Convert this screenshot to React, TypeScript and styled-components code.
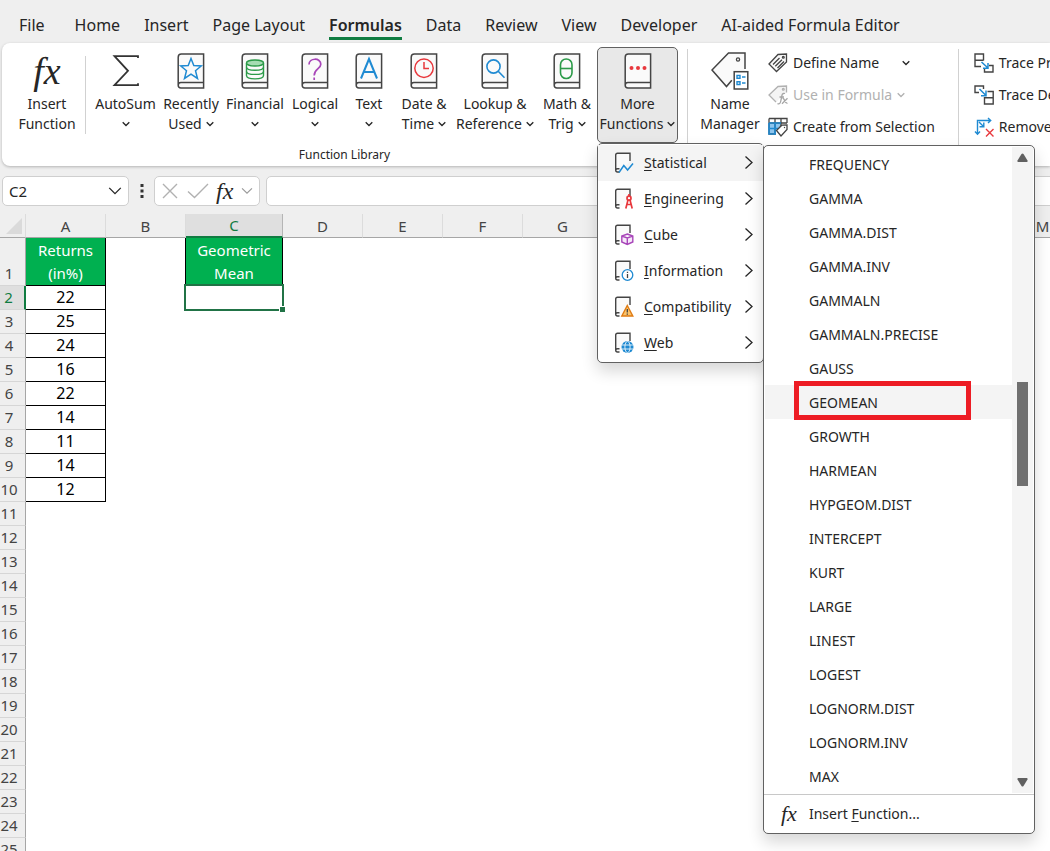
import React from "react";
import styled, { createGlobalStyle, css } from "styled-components";

const UI = `"Noto Sans", "Open Sans", sans-serif`;
const INK = "#262626";
const LINE = "#444444";
const BLUE = "#1f8ad2";
const GREEN = "#107c41";

const Global = createGlobalStyle`
  *, *::before, *::after { box-sizing: border-box; }
  body { margin: 0; background: #fff; color: ${INK}; font: 14px/20px ${UI}; }
  button, input { font: inherit; color: inherit; border: 0; background: none; padding: 0; margin: 0; }
  svg { display: block; flex: none; }
`;

const Page = styled.div`
  height: 100vh;
  overflow: hidden;
  display: flex;
  flex-direction: column;
  background: #efefef;
`;

/* ---------- tabs ---------- */
const Tabs = styled.nav`
  flex: none;
  display: flex;
  gap: 24px;
  height: 43px;
  padding: 10px 0 0 19px;
  white-space: nowrap;
`;
const Tab = styled.button<{ $active?: boolean; $wide?: boolean }>`
  height: 30px;
  font-size: 16px;
  line-height: 30px;
  margin-right: ${(p) => (p.$wide ? 6 : 0)}px;
  border-bottom: 3px solid ${(p) => (p.$active ? GREEN : "transparent")};
  font-weight: ${(p) => (p.$active ? 600 : 400)};
`;

/* ---------- ribbon ---------- */
const Ribbon = styled.div`
  flex: none;
  position: relative;
  z-index: 2;
  display: flex;
  height: 123px;
  margin-left: 2px;
  padding-top: 4px;
  background: #fff;
  border-radius: 8px 0 0 8px;
  box-shadow: 0 1px 3px rgba(0, 0, 0, 0.25);
  white-space: nowrap;
`;
const Group = styled.section`
  flex: none;
  display: flex;
  flex-direction: column;
`;
const GroupRow = styled.div<{ $pad?: string }>`
  display: flex;
  padding: ${(p) => p.$pad || "0 9px 0 8px"};
`;
const GroupName = styled.div`
  font-size: 12px;
  line-height: 24px;
  text-align: center;
`;
const Rule = styled.div<{ $short?: boolean }>`
  flex: none;
  width: 1px;
  height: ${(p) => (p.$short ? 78 : 112)}px;
  margin: ${(p) => (p.$short ? "9px 6px 0 1px" : "2px 0 0")};
  background: #d1d1d1;
`;
const BigButton = styled.button<{ $w: number; $open?: boolean }>`
  display: flex;
  flex-direction: column;
  align-items: center;
  width: ${(p) => p.$w}px;
  height: 96px;
  padding-top: 5px;
  font-size: 14px;
  line-height: 20px;
  border: 1px solid transparent;
  border-radius: 5px;
  ${(p) =>
    p.$open &&
    css`
      background: #e8e8e8;
      border-color: #616161;
    `}
`;
const BigIcon = styled.span`
  display: flex;
  align-items: center;
  justify-content: center;
  height: 36px;
  margin-bottom: 5px;
`;
const LabelLine = styled.span`
  display: flex;
  align-items: center;
  justify-content: center;
  gap: 4px;
  height: 20px;
`;
const Fx = styled.span<{ $size: number }>`
  font: italic ${(p) => p.$size}px/1 "Liberation Serif", serif;
  color: #262626;
`;
const SmallColumn = styled.div<{ $indent?: boolean }>`
  display: flex;
  flex-direction: column;
  padding-left: ${(p) => (p.$indent ? 4 : 0)}px;
`;
const SmallButton = styled.button<{ $gap?: number }>`
  display: flex;
  align-items: center;
  gap: 5px;
  height: 32px;
  text-align: left;
  &:disabled { color: #b1b1b1; }
  & > svg:last-child { margin-left: ${(p) => p.$gap || 0}px; }
`;
const Anchor = styled.div`
  position: relative;
`;

/* ---------- menus ---------- */
const menuSurface = css`
  position: absolute;
  background: #fff;
  border: 1px solid #616161;
  border-radius: 5px;
  box-shadow: 0 8px 16px rgba(0, 0, 0, 0.16);
`;
const Menu = styled.div`
  ${menuSurface}
  top: 96px;
  left: 0;
  width: 167px;
  padding: 1px 0;
`;
const MenuItem = styled.button<{ $hot?: boolean }>`
  display: flex;
  align-items: center;
  gap: 10px;
  width: 100%;
  height: 36px;
  padding: 0 10px 0 16px;
  text-align: left;
  background: ${(p) => (p.$hot ? "#f4f4f4" : "transparent")};
  & > span { flex: 1; }
  u { text-underline-offset: 2px; }
`;
const SubMenu = styled.div`
  ${menuSurface}
  top: 1px;
  left: 165px;
  width: 272px;
`;
const SubBody = styled.div`
  display: flex;
  padding: 1px;
`;
const FnList = styled.div`
  flex: 1;
`;
const FnItem = styled.button<{ $hot?: boolean }>`
  position: relative;
  display: block;
  width: 100%;
  height: 34px;
  padding: 1px 0 0 44px;
  text-align: left;
  background: ${(p) => (p.$hot ? "#f4f4f4" : "transparent")};
`;
const Highlight = styled.span`
  position: absolute;
  inset: -4px 41px -1px 29px;
  border: 5px solid #ed1c24;
`;
const Scroll = styled.div`
  display: flex;
  flex-direction: column;
  align-items: center;
  width: 21px;
  padding: 6px 0;
  background: #f4f4f4;
  & > :last-child { margin-top: auto; }
`;
const Thumb = styled.div`
  width: 11px;
  height: 104px;
  margin-top: 220px;
  background: #707070;
`;
const SubFooter = styled.button`
  display: flex;
  align-items: center;
  gap: 12px;
  width: 100%;
  height: 39px;
  padding-left: 17px;
  border-top: 1px solid #c8c8c8;
  text-align: left;
  u { text-underline-offset: 2px; }
`;

/* ---------- formula bar ---------- */
const FormulaBar = styled.div`
  flex: none;
  display: flex;
  gap: 6px;
  height: 48px;
  padding: 10px 0 8px 2px;
`;
const Field = styled.div<{ $w?: number }>`
  display: flex;
  align-items: center;
  justify-content: space-between;
  flex: ${(p) => (p.$w ? "none" : "1")};
  width: ${(p) => (p.$w ? p.$w + "px" : "auto")};
  padding: 0 6px;
  background: #fff;
  border: 1px solid #cfcfcf;
  border-radius: 5px;
  margin-right: ${(p) => (p.$w ? 0 : -8)}px;
`;
const FieldInput = styled.input`
  flex: 1;
  min-width: 0;
  height: 28px;
  font-size: 15px;
  outline: 0;
`;
const Dots = styled.div`
  display: flex;
  align-items: center;
  justify-content: center;
  width: 13px;
`;

/* ---------- grid ---------- */
const GridArea = styled.div`
  flex: 1;
  min-height: 0;
  overflow: hidden;
  background: #fff;
`;
const Sheet = styled.table`
  table-layout: fixed;
  width: 1083px;
  border-collapse: separate;
  border-spacing: 0;
  th, td { padding: 0; font-weight: 400; }
`;
const ColHead = styled.th<{ $on?: boolean }>`
  height: 24px;
  font-size: 15px;
  line-height: 22px;
  color: ${(p) => (p.$on ? GREEN : LINE)};
  background: ${(p) => (p.$on ? "#dfdfdf" : "#efefef")};
  border-right: 1px solid ${(p) => (p.$on ? "#b5b5b5" : "#dcdcdc")};
  border-bottom: ${(p) => (p.$on ? `2px solid ${GREEN}` : "1px solid #a6a6a6")};
`;
const Corner = styled.td`
  background: #efefef;
  border-right: 1px solid #dcdcdc;
  border-bottom: 1px solid #a6a6a6;
  & > svg { margin-left: 6px; }
`;
const RowHead = styled.th<{ $on?: boolean; $tall?: boolean }>`
  height: ${(p) => (p.$tall ? 48 : 24)}px;
  vertical-align: bottom;
  font-size: 15px;
  line-height: 23px;
  text-align: center;
  && { padding-right: 7px; }
  color: ${(p) => (p.$on ? GREEN : LINE)};
  background: ${(p) => (p.$on ? "#dfdfdf" : "#efefef")};
  border-bottom: 1px solid #d6d6d6;
  border-right: ${(p) => (p.$on ? `2px solid ${GREEN}` : "1px solid #a6a6a6")};
`;
const Cell = styled.td<{ $kind?: "head" | "data" | "edge" }>`
  position: relative;
  text-align: center;
  font-size: 15px;
  line-height: 23px;
  ${(p) =>
    p.$kind === "head" &&
    css`
      color: #fff;
      background: #00b050;
      border-right: 1px solid #000;
      border-bottom: 1px solid #000;
    `}
  ${(p) =>
    p.$kind === "data" &&
    css`
      color: #000;
      font-size: 16px;
      border-right: 1px solid #000;
      border-bottom: 1px solid #000;
    `}
  ${(p) =>
    p.$kind === "edge" &&
    css`
      border-right: 1px solid #000;
    `}
`;
const Selection = styled.div`
  position: absolute;
  inset: -2px -1px -1px -2px;
  border: 2px solid #217346;
  &::after {
    content: "";
    position: absolute;
    right: -3px;
    bottom: -3px;
    width: 6px;
    height: 6px;
    background: #217346;
    border-top: 1px solid #fff;
    border-left: 1px solid #fff;
  }
`;

/* ---------- icons ---------- */
const Chevron = ({ color = INK, w = 8 }: { color?: string; w?: number }) => (
  <svg width={w} height={w} viewBox="0 0 8 8" fill="none" stroke={color} strokeWidth={w > 8 ? 0.75 : 1.3} aria-hidden="true">
    <path d="M0.7 2.2 4 5.5 7.3 2.2" />
  </svg>
);
const RightChevron = () => (
  <svg width="9" height="14" viewBox="0 0 9 14" fill="none" stroke={INK} strokeWidth="1.3" aria-hidden="true">
    <path d="M1.5 0.5 8 6.5 1.5 12.5" />
  </svg>
);
const Book = ({ children, fill = "#fafafa" }: { children?: React.ReactNode; fill?: string }) => (
  <svg width="28" height="36" viewBox="0 0 28 36" fill="none" aria-hidden="true">
    <path d="M1.2 32.3V4.2Q1.2 1 4.4 1H26.6V35H3.9Q1.2 35 1.2 32.3Q1.2 29.6 3.9 29.6H26.6" fill={fill} stroke={LINE} strokeWidth="1.5" />
    {children}
  </svg>
);
const Sigma = () => (
  <svg width="28" height="34" viewBox="0 0 28 34" fill="none" stroke="#333" strokeWidth="1.8" aria-hidden="true">
    <path d="M26 4V2.2H2.5L16 16.8 2.5 31.2H26V29.3" />
  </svg>
);
const glyphs = {
  star: <path d="M14 5.5 16.8 12.6 24.2 13 18.5 17.7 20.5 25.5 14 21.2 7.5 25.5 9.5 17.7 3.8 13 11.2 12.6Z" stroke={BLUE} strokeWidth="1.5" />,
  coins: (
    <g stroke="#2b9a48" strokeWidth="1.4">
      <path d="M5.5 10V22.5C5.5 27 22.5 27 22.5 22.5V10" />
      <ellipse cx="14" cy="10" rx="8.5" ry="3" fill="#a5dcb2" />
      <path d="M5.5 14.2C5.5 18.2 22.5 18.2 22.5 14.2M5.5 18.4C5.5 22.4 22.5 22.4 22.5 18.4" />
    </g>
  ),
  question: (
    <g stroke="#a846b9" strokeWidth="1.7">
      <path d="M8 11.5C8 4.5 19.8 4.5 19.8 11.3C19.8 15.8 13.2 15.8 13.2 22.5" />
      <path d="M13.2 24.5V27" />
    </g>
  ),
  letter: <path d="M6 25.5 14 6 22 25.5M8.7 19H19.3" stroke={BLUE} strokeWidth="2" />,
  clock: (
    <g stroke="#e8383d" strokeWidth="1.5">
      <circle cx="14" cy="15.2" r="9.2" />
      <path d="M14 9V15.5H19" />
    </g>
  ),
  lens: (
    <g stroke={BLUE} strokeWidth="1.6">
      <circle cx="12.5" cy="13.5" r="6.6" />
      <path d="M17.2 18.2 23.5 24.8" />
    </g>
  ),
  theta: (
    <g stroke="#2b9a48" strokeWidth="1.6">
      <rect x="7.5" y="6" width="11.5" height="19.5" rx="5.7" />
      <path d="M7.5 15.5H19" />
    </g>
  ),
  dots: (
    <g fill="#e8383d">
      <circle cx="7.5" cy="15" r="2" />
      <circle cx="14" cy="15" r="2" />
      <circle cx="20.5" cy="15" r="2" />
    </g>
  ),
};
const NameManagerIcon = () => (
  <svg width="38" height="38" viewBox="0 0 38 38" fill="none" aria-hidden="true">
    <path d="M22 32.5 15.5 34.5 1 18 17.5 1H34V20" fill="#fafafa" />
    <path d="M20.8 28.2 15.5 34.5 1 18 17.5 1H34V17" stroke={LINE} strokeWidth="1.5" />
    <circle cx="27" cy="7.5" r="1.6" stroke={LINE} strokeWidth="1.3" />
    <rect x="23.2" y="19.7" width="13.6" height="17.3" fill="#fff" stroke={LINE} strokeWidth="1.5" />
    <path d="M26 23.5H29V26.3H26ZM26 29.7H29V32.5H26ZM31 25H34.5M31 31H34.5" stroke={BLUE} strokeWidth="1.4" />
  </svg>
);
const TagIcon = () => (
  <svg width="20" height="20" viewBox="0 0 20 20" fill="none" stroke={LINE} strokeWidth="1.3" aria-hidden="true">
    <path d="M1 11 10 1.5 18.5 1 18.5 9 8.5 18.5Z" fill="#fafafa" />
    <circle cx="15.3" cy="4.2" r="0.9" />
    <path d="M5 11.5 11.5 5M7.3 13.3 14 6.7M9.5 15 16 8.5" />
  </svg>
);
const FormulaTagIcon = () => (
  <svg width="20" height="20" viewBox="0 0 20 20" fill="none" stroke="#b1b1b1" strokeWidth="1.3" aria-hidden="true">
    <path d="M8 17 1 10 10 1.5 18.5 1V7.5" fill="#f4f4f4" />
    <circle cx="15.3" cy="4.2" r="0.9" />
    <path d="M17 8.5C13.5 7.5 14 11 13 15C12.5 18.5 11.5 19.3 9.5 18.7M11.5 12H16M14.5 13.5C16.5 12.5 16.5 18.5 19.5 18.3M19.5 13.3 14 18.8" stroke="#a6a6a6" />
  </svg>
);
const SelectionIcon = () => (
  <svg width="20" height="20" viewBox="0 0 20 20" fill="none" aria-hidden="true">
    <path d="M1 6H13V9L8 13V17H1Z" fill="#8ec5ee" />
    <path d="M1 1.5H19V6M1 1.5V17H8M1 6H19M7 1.5V17M13 1.5V9" stroke={LINE} strokeWidth="1.3" />
    <path d="M1 6V17H8M1 11.5H10M7 6V17M1 6H13" stroke={BLUE} strokeWidth="1.6" />
    <path d="M8.5 13.5 13.8 8.2 19 8V12.5L13 19Z" fill="#fff" stroke={LINE} strokeWidth="1.3" />
    <circle cx="16.5" cy="10.5" r="0.7" fill={LINE} />
  </svg>
);
const PrecedentsIcon = () => (
  <svg width="20" height="20" viewBox="0 0 20 20" fill="none" aria-hidden="true">
    <path d="M7 13.5H1V1H9.5V7.5M1 7.2H9.5M15 12.5H19V19H10.5V15.5" stroke={LINE} strokeWidth="1.4" />
    <path d="M7.5 9 14 15M14 10V15.3H9" stroke={BLUE} strokeWidth="1.5" />
  </svg>
);
const DependentsIcon = () => (
  <svg width="20" height="20" viewBox="0 0 20 20" fill="none" aria-hidden="true">
    <path d="M5 7.5H1V1H9.5V4M13.5 6.5H19.2V19H10.5V12.8H19" stroke={LINE} strokeWidth="1.4" />
    <path d="M5.5 4 12 10.5M12 5.5V10.8H7" stroke={BLUE} strokeWidth="1.5" />
  </svg>
);
const RemoveArrowsIcon = () => (
  <svg width="20" height="20" viewBox="0 0 20 20" fill="none" aria-hidden="true">
    <path d="M3.5 17V3.5H16M14 1 16.7 3.5 14 6M1 14.5 3.5 17.2 6 14.5M5 5 9.5 9.5M9.8 5.5V9.8H5.5" stroke={BLUE} strokeWidth="1.4" />
    <path d="M12 12 19.5 19.5M19.5 12 12 19.5" stroke="#e8383d" strokeWidth="1.4" />
  </svg>
);
const SmallBook = ({ children }: { children: React.ReactNode }) => (
  <svg width="20" height="22" viewBox="0 0 20 22" fill="none" aria-hidden="true">
    <path d="M5.5 20H3.5Q1.7 20 1.7 18V3Q1.7 1.3 3.5 1.3H16V9M5.5 16.8H3.5Q1.7 16.8 1.7 18.5" fill="#fafafa" stroke={LINE} strokeWidth="1.4" />
    {children}
  </svg>
);
const menuGlyphs = {
  stat: <path d="M5 20.5 9.8 13.5 13.6 18 19 11.5" stroke={BLUE} strokeWidth="1.5" />,
  eng: (
    <g stroke="#e8383d" strokeWidth="1.7">
      <path d="M15 6V8.5M11.8 20.5 14 12M18.2 20.5 16 12M12.5 16.5H17.5" />
      <circle cx="15" cy="10.2" r="2" />
    </g>
  ),
  cube: (
    <path d="M13.3 10 18.8 12V18L13.3 20.5 7.8 18V12ZM7.8 12 13.3 14 18.8 12M13.3 14V20.5" fill="#f6e9f9" stroke="#a846b9" strokeWidth="1.4" />
  ),
  info: (
    <g>
      <circle cx="13.5" cy="15" r="5.3" fill="#fff" stroke={BLUE} strokeWidth="1.3" />
      <path d="M13.5 14V18M13.5 11.8V13" stroke={LINE} strokeWidth="1.3" />
    </g>
  ),
  warn: (
    <g>
      <path d="M13.3 9.5 18.8 20H7.8Z" fill="#fbc36b" stroke="#e07b12" strokeWidth="1.4" />
      <path d="M13.3 13V16.5M13.3 17.5V18.8" stroke={LINE} strokeWidth="1.3" />
    </g>
  ),
  web: (
    <g>
      <circle cx="13.5" cy="15" r="6" fill={BLUE} />
      <path d="M8 13H19M8 17H19" stroke="#fff" strokeWidth="0.8" />
      <ellipse cx="13.5" cy="15" rx="2.6" ry="5.6" stroke="#fff" strokeWidth="0.8" />
    </g>
  ),
};
const Triangle = ({ down }: { down?: boolean }) => (
  <svg width="11" height="9" viewBox="0 0 11 9" fill="#606060" aria-hidden="true">
    {down ? <path d="M1 0H10Q11 0.5 10.5 1.5L6.5 8Q5.5 9 4.5 8L0.5 1.5Q0 0.5 1 0Z" /> : <path d="M1 9H10Q11 8.5 10.5 7.5L6.5 1Q5.5 0 4.5 1L0.5 7.5Q0 8.5 1 9Z" />}
  </svg>
);

/* ---------- data ---------- */
const tabs = ["File", "Home", "Insert", "Page Layout", "Formulas", "Data", "Review", "View", "Developer", "AI-aided Formula Editor"];
const library: { w: number; icon: keyof typeof glyphs; lines: [string, string] }[] = [
  { w: 64, icon: "star", lines: ["Recently", "Used"] },
  { w: 64, icon: "coins", lines: ["Financial", ""] },
  { w: 56, icon: "question", lines: ["Logical", ""] },
  { w: 52, icon: "letter", lines: ["Text", ""] },
  { w: 58, icon: "clock", lines: ["Date &", "Time"] },
  { w: 84, icon: "lens", lines: ["Lookup &", "Reference"] },
  { w: 60, icon: "theta", lines: ["Math &", "Trig"] },
];
const categories: [string, keyof typeof menuGlyphs][] = [
  ["Statistical", "stat"],
  ["Engineering", "eng"],
  ["Cube", "cube"],
  ["Information", "info"],
  ["Compatibility", "warn"],
  ["Web", "web"],
];
const functions = [
  "FREQUENCY", "GAMMA", "GAMMA.DIST", "GAMMA.INV", "GAMMALN", "GAMMALN.PRECISE", "GAUSS", "GEOMEAN", "GROWTH", "HARMEAN",
  "HYPGEOM.DIST", "INTERCEPT", "KURT", "LARGE", "LINEST", "LOGEST", "LOGNORM.DIST", "LOGNORM.INV", "MAX",
];
const columns = "ABCDEFGHIJKLM".split("");
/* columns that lie behind the open menus carry no letter */
const covered = "HIJKL";
const returns = [22, 25, 24, 16, 22, 14, 11, 14, 12];
const rows = Array.from({ length: 25 }, (_, i) => i + 1);

const cellFor = (col: string, row: number) => {
  if (row === 1 && col === "A") return <Cell key={col} $kind="head">Returns<br />(in%)</Cell>;
  if (row === 1 && col === "B") return <Cell key={col} $kind="edge" />;
  if (row === 1 && col === "C") return <Cell key={col} $kind="head">Geometric<br />Mean</Cell>;
  if (col === "A" && row <= 10) return <Cell key={col} $kind="data">{returns[row - 2]}</Cell>;
  if (col === "C" && row === 2) return <Cell key={col}><Selection /></Cell>;
  return <Cell key={col} />;
};

export default function App() {
  return (
    <Page>
      <Global />
      <Tabs>
        {tabs.map((t) => (
          <Tab key={t} $active={t === "Formulas"} $wide={t === "File"}>{t}</Tab>
        ))}
      </Tabs>

      <Ribbon>
        <Group>
          <GroupRow>
            <BigButton $w={74}>
              <BigIcon><Fx $size={38}>fx</Fx></BigIcon>
              <LabelLine>Insert</LabelLine>
              <LabelLine>Function</LabelLine>
            </BigButton>
            <Rule $short />
            <BigButton $w={67}>
              <BigIcon><Sigma /></BigIcon>
              <LabelLine>AutoSum</LabelLine>
              <LabelLine><Chevron /></LabelLine>
            </BigButton>
            {library.map((b) => (
              <BigButton key={b.icon} $w={b.w}>
                <BigIcon><Book>{glyphs[b.icon]}</Book></BigIcon>
                <LabelLine>{b.lines[0]}</LabelLine>
                <LabelLine>{b.lines[1]}<Chevron /></LabelLine>
              </BigButton>
            ))}
            <Anchor>
              <BigButton $w={81} $open aria-haspopup="menu" aria-expanded="true">
                <BigIcon><Book>{glyphs.dots}</Book></BigIcon>
                <LabelLine>More</LabelLine>
                <LabelLine>Functions<Chevron /></LabelLine>
              </BigButton>
              <Menu role="menu">
                {categories.map(([name, icon]) => (
                  <MenuItem key={name} role="menuitem" $hot={name === "Statistical"}>
                    <SmallBook>{menuGlyphs[icon]}</SmallBook>
                    <span><u>{name[0]}</u>{name.slice(1)}</span>
                    <RightChevron />
                  </MenuItem>
                ))}
                <SubMenu role="menu">
                  <SubBody>
                    <FnList>
                      {functions.map((f) => (
                        <FnItem key={f} role="menuitem" $hot={f === "GEOMEAN"}>
                          {f}
                          {f === "GEOMEAN" && <Highlight />}
                        </FnItem>
                      ))}
                    </FnList>
                    <Scroll>
                      <Triangle />
                      <Thumb />
                      <Triangle down />
                    </Scroll>
                  </SubBody>
                  <SubFooter role="menuitem">
                    <Fx $size={22}>fx</Fx>
                    <span>Insert <u>F</u>unction...</span>
                  </SubFooter>
                </SubMenu>
              </Menu>
            </Anchor>
          </GroupRow>
          <GroupName>Function Library</GroupName>
        </Group>
        <Rule />
        <Group>
          <GroupRow $pad="0 23px 0 8px">
            <BigButton $w={68}>
              <BigIcon><NameManagerIcon /></BigIcon>
              <LabelLine>Name</LabelLine>
              <LabelLine>Manager</LabelLine>
            </BigButton>
            <SmallColumn $indent>
              <SmallButton $gap={18}><TagIcon />Define Name<Chevron /></SmallButton>
              <SmallButton disabled><FormulaTagIcon />Use in Formula<Chevron color="#b1b1b1" /></SmallButton>
              <SmallButton><SelectionIcon />Create from Selection</SmallButton>
            </SmallColumn>
          </GroupRow>
        </Group>
        <Rule />
        <Group>
          <GroupRow $pad="0 15px">
            <SmallColumn>
              <SmallButton><PrecedentsIcon />Trace Precedents</SmallButton>
              <SmallButton><DependentsIcon />Trace Dependents</SmallButton>
              <SmallButton><RemoveArrowsIcon />Remove Arrows</SmallButton>
            </SmallColumn>
          </GroupRow>
        </Group>
      </Ribbon>

      <FormulaBar>
        <Field $w={127}>
          <FieldInput aria-label="Name box" defaultValue="C2" />
          <Chevron w={14} />
        </Field>
        <Dots>
          <svg width="4" height="16" viewBox="0 0 4 16" fill="#333" aria-hidden="true">
            <path d="M0.5 1H3.5V4H0.5ZM0.5 6.5H3.5V9.5H0.5ZM0.5 12H3.5V15H0.5Z" />
          </svg>
        </Dots>
        <Field $w={106}>
          <svg width="18" height="18" viewBox="0 0 18 18" fill="none" stroke="#b1b1b1" strokeWidth="1.4" aria-hidden="true">
            <path d="M2 2 16 16M16 2 2 16" />
          </svg>
          <svg width="22" height="18" viewBox="0 0 22 18" fill="none" stroke="#b1b1b1" strokeWidth="1.4" aria-hidden="true">
            <path d="M1 9.5 7.5 15.5 21 2" />
          </svg>
          <Fx $size={24}>fx</Fx>
          <Chevron w={12} color="#999" />
        </Field>
        <Field>
          <FieldInput aria-label="Formula" />
        </Field>
      </FormulaBar>

      <GridArea>
        <Sheet>
          <colgroup>
            <col width="26" />
            {columns.map((c) => <col key={c} width={c === "C" ? 97 : 80} />)}
          </colgroup>
          <thead>
            <tr>
              <Corner>
                <svg width="16" height="16" viewBox="0 0 16 16" fill="#dadada" aria-hidden="true"><path d="M16 0V16H0Z" /></svg>
              </Corner>
              {columns.map((c) => <ColHead key={c} scope="col" $on={c === "C"}>{covered.includes(c) ? null : c}</ColHead>)}
            </tr>
          </thead>
          <tbody>
            {rows.map((r) => (
              <tr key={r}>
                <RowHead scope="row" $on={r === 2} $tall={r === 1}>{r}</RowHead>
                {columns.map((c) => cellFor(c, r))}
              </tr>
            ))}
          </tbody>
        </Sheet>
      </GridArea>
    </Page>
  );
}
